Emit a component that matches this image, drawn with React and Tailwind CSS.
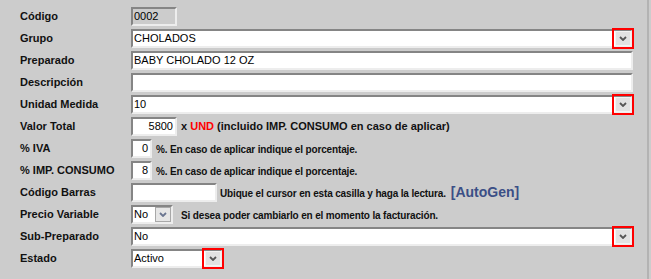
import React from "react"

const inset = "border-2 border-t-[#858585] border-l-[#858585] border-r-[#ededed] border-b-[#ededed]"
const font = { fontFamily: "'Liberation Sans', Arial, sans-serif" }

function Chevron({ color = "#555" }) {
    return (
        <svg width="8" height="5" viewBox="0 0 8 5">
            <path d="M1 1 L4 4 L7 1" fill="none" stroke={color} strokeWidth="1.8" />
        </svg>
    )
}

function RedButton() {
    return (
        <div className="-my-[3px] -mr-[3px] w-[22px] h-[21px] border-2 border-[#ff0000] flex items-center justify-center shrink-0">
            <div className="w-[16px] h-[15px] bg-[#e2e2e2] border border-[#f3f3f3] flex items-center justify-center">
                <Chevron />
            </div>
        </div>
    )
}

function Select({ value, width = "w-[502px]" }) {
    return (
        <div className={`${inset} bg-white h-[19px] ${width} flex items-center`}>
            <span className="flex-1 pl-[1px] text-[11px] text-black leading-none">{value}</span>
            <RedButton />
        </div>
    )
}

function Text({ value, width = "w-[502px]", right, gray }) {
    return (
        <div className={`${inset} ${gray ? "bg-[#cccccc]" : "bg-white"} h-[19px] ${width} flex items-center ${right ? "justify-end pr-[2px]" : "pl-[1px]"}`}>
            <span className="text-[11px] text-black leading-none">{value}</span>
        </div>
    )
}

function Help({ children }) {
    return <span className="text-[10px] font-bold tracking-[-0.15px] text-[#111]">{children}</span>
}

function Row({ label, children }) {
    return (
        <div className="flex items-center h-[22px]">
            <div className="w-[131px] pl-[20px] text-[11px] font-bold text-[#111]">{label}</div>
            <div className="flex items-center">{children}</div>
        </div>
    )
}

export default function App() {
    return (
        <div className="w-[651px] h-[279px] bg-[#cccccc]" style={font}>
            <div className="w-[649px] h-[279px] border-r-2 border-[#b3b3b3] pt-[5px]">

                <Row label="Código">
                    <Text value="0002" width="w-[46px]" gray />
                </Row>

                <Row label="Grupo">
                    <Select value="CHOLADOS" />
                </Row>

                <Row label="Preparado">
                    <Text value="BABY CHOLADO 12 OZ" />
                </Row>

                <Row label="Descripción">
                    <Text value="" />
                </Row>

                <Row label="Unidad Medida">
                    <Select value="10" />
                </Row>

                <Row label="Valor Total">
                    <Text value="5800" width="w-[46px]" right />
                    <span className="ml-[4px] text-[11px] font-bold text-[#111]">
                        x <span className="text-[#ff0000]">UND</span> (incluido IMP. CONSUMO en caso de aplicar)
                    </span>
                </Row>

                <Row label="% IVA">
                    <Text value="0" width="w-[21px]" right />
                    <span className="ml-[4px]"><Help>%. En caso de aplicar indique el porcentaje.</Help></span>
                </Row>

                <Row label="% IMP. CONSUMO">
                    <Text value="8" width="w-[21px]" right />
                    <span className="ml-[4px]"><Help>%. En caso de aplicar indique el porcentaje.</Help></span>
                </Row>

                <Row label="Código Barras">
                    <Text value="" width="w-[86px]" />
                    <span className="ml-[3px]"><Help>Ubique el cursor en esta casilla y haga la lectura.</Help></span>
                    <span className="ml-[5px] text-[14px] font-bold text-[#3b4f86]">[AutoGen]</span>
                </Row>

                <Row label="Precio Variable">
                    <div className={`${inset} bg-white h-[19px] w-[42px] flex items-center`}>
                        <span className="flex-1 pl-[1px] text-[11px] text-black leading-none">No</span>
                        <div className="w-[16px] h-[15px] bg-[#e6e6e6] border border-[#a8a8a8] flex items-center justify-center">
                            <Chevron color="#6a7590" />
                        </div>
                    </div>
                    <span className="ml-[8px]"><Help>Si desea poder cambiarlo en el momento la facturación.</Help></span>
                </Row>

                <Row label="Sub-Preparado">
                    <Select value="No" />
                </Row>

                <Row label="Estado">
                    <Select value="Activo" width="w-[92px]" />
                </Row>

            </div>
        </div>
    )
}
